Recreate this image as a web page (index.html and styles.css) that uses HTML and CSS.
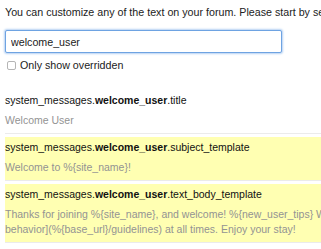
FILE: index.html
```html
<!DOCTYPE html>
<html lang="en">
<head>
    <meta charset="UTF-8">
    <title>Customize Text</title>
    <link rel="stylesheet" href="styles.css">
</head>
<body>
    <div class="page">
        <p class="intro">You can customize any of the text on your forum. Please start by searching below:</p>
        <input class="search" type="text" value="welcome_user">
        <label class="overridden"><span class="box"></span>Only show overridden</label>

        <div class="results">
            <div class="item">
                <div class="key">system_messages.<b>welcome_user</b>.title</div>
                <div class="value">Welcome User</div>
            </div>
            <div class="item overriden">
                <div class="key">system_messages.<b>welcome_user</b>.subject_template</div>
                <div class="value">Welcome to %{site_name}!</div>
            </div>
            <div class="item overriden">
                <div class="key">system_messages.<b>welcome_user</b>.text_body_template</div>
                <div class="value">Thanks for joining %{site_name}, and welcome! %{new_user_tips} We believe in [civilized community behavior](%{base_url}/guidelines) at all times. Enjoy your stay!</div>
            </div>
        </div>
    </div>
</body>
</html>
```

FILE: styles.css
```css
body{
    margin: 0;
    background-color: #fff;
    font-family: "Liberation Sans", Arial, sans-serif;
    font-size: 10.5px;
    color: #222;
    overflow: hidden;
}

*{
    box-sizing: border-box;
}

.page{
    width: 520px;
    padding: 5px 0 0 5px;
}

.intro{
    margin: 0 0 10px;
    font-size: 10.7px;
    line-height: 15px;
    white-space: nowrap;
}

.search{
    display: block;
    width: 277px;
    height: 23px;
    margin: 0;
    padding: 0 5px;
    font-family: inherit;
    font-size: 10.7px;
    color: #222;
    border: 1px solid #6ea3e2;
    border-radius: 2px;
    box-shadow: 0 0 2px 1px #b6d1f3;
    outline: none;
}

.overridden{
    display: flex;
    align-items: center;
    margin-top: 5px;
    font-size: 10.7px;
    line-height: 15px;
    color: #222;
}

.box{
    width: 9px;
    height: 9px;
    margin: 0 4px 0 2px;
    border: 1px solid #b5b5b5;
    border-radius: 2px;
    background-color: #fff;
}

.results{
    margin-top: 17px;
}

.item{
    padding: 3px 0 5px 0;
    border-bottom: 1px solid #ebebeb;
    margin-bottom: 3px;
}

.item.overriden{
    background-color: #ffffb2;
}

.item.overriden + .item.overriden{
    margin-top: 1px;
}

.key{
    line-height: 15px;
    color: #111;
}

.value{
    margin-top: 5px;
    line-height: 15px;
    color: #939393;
}
```
